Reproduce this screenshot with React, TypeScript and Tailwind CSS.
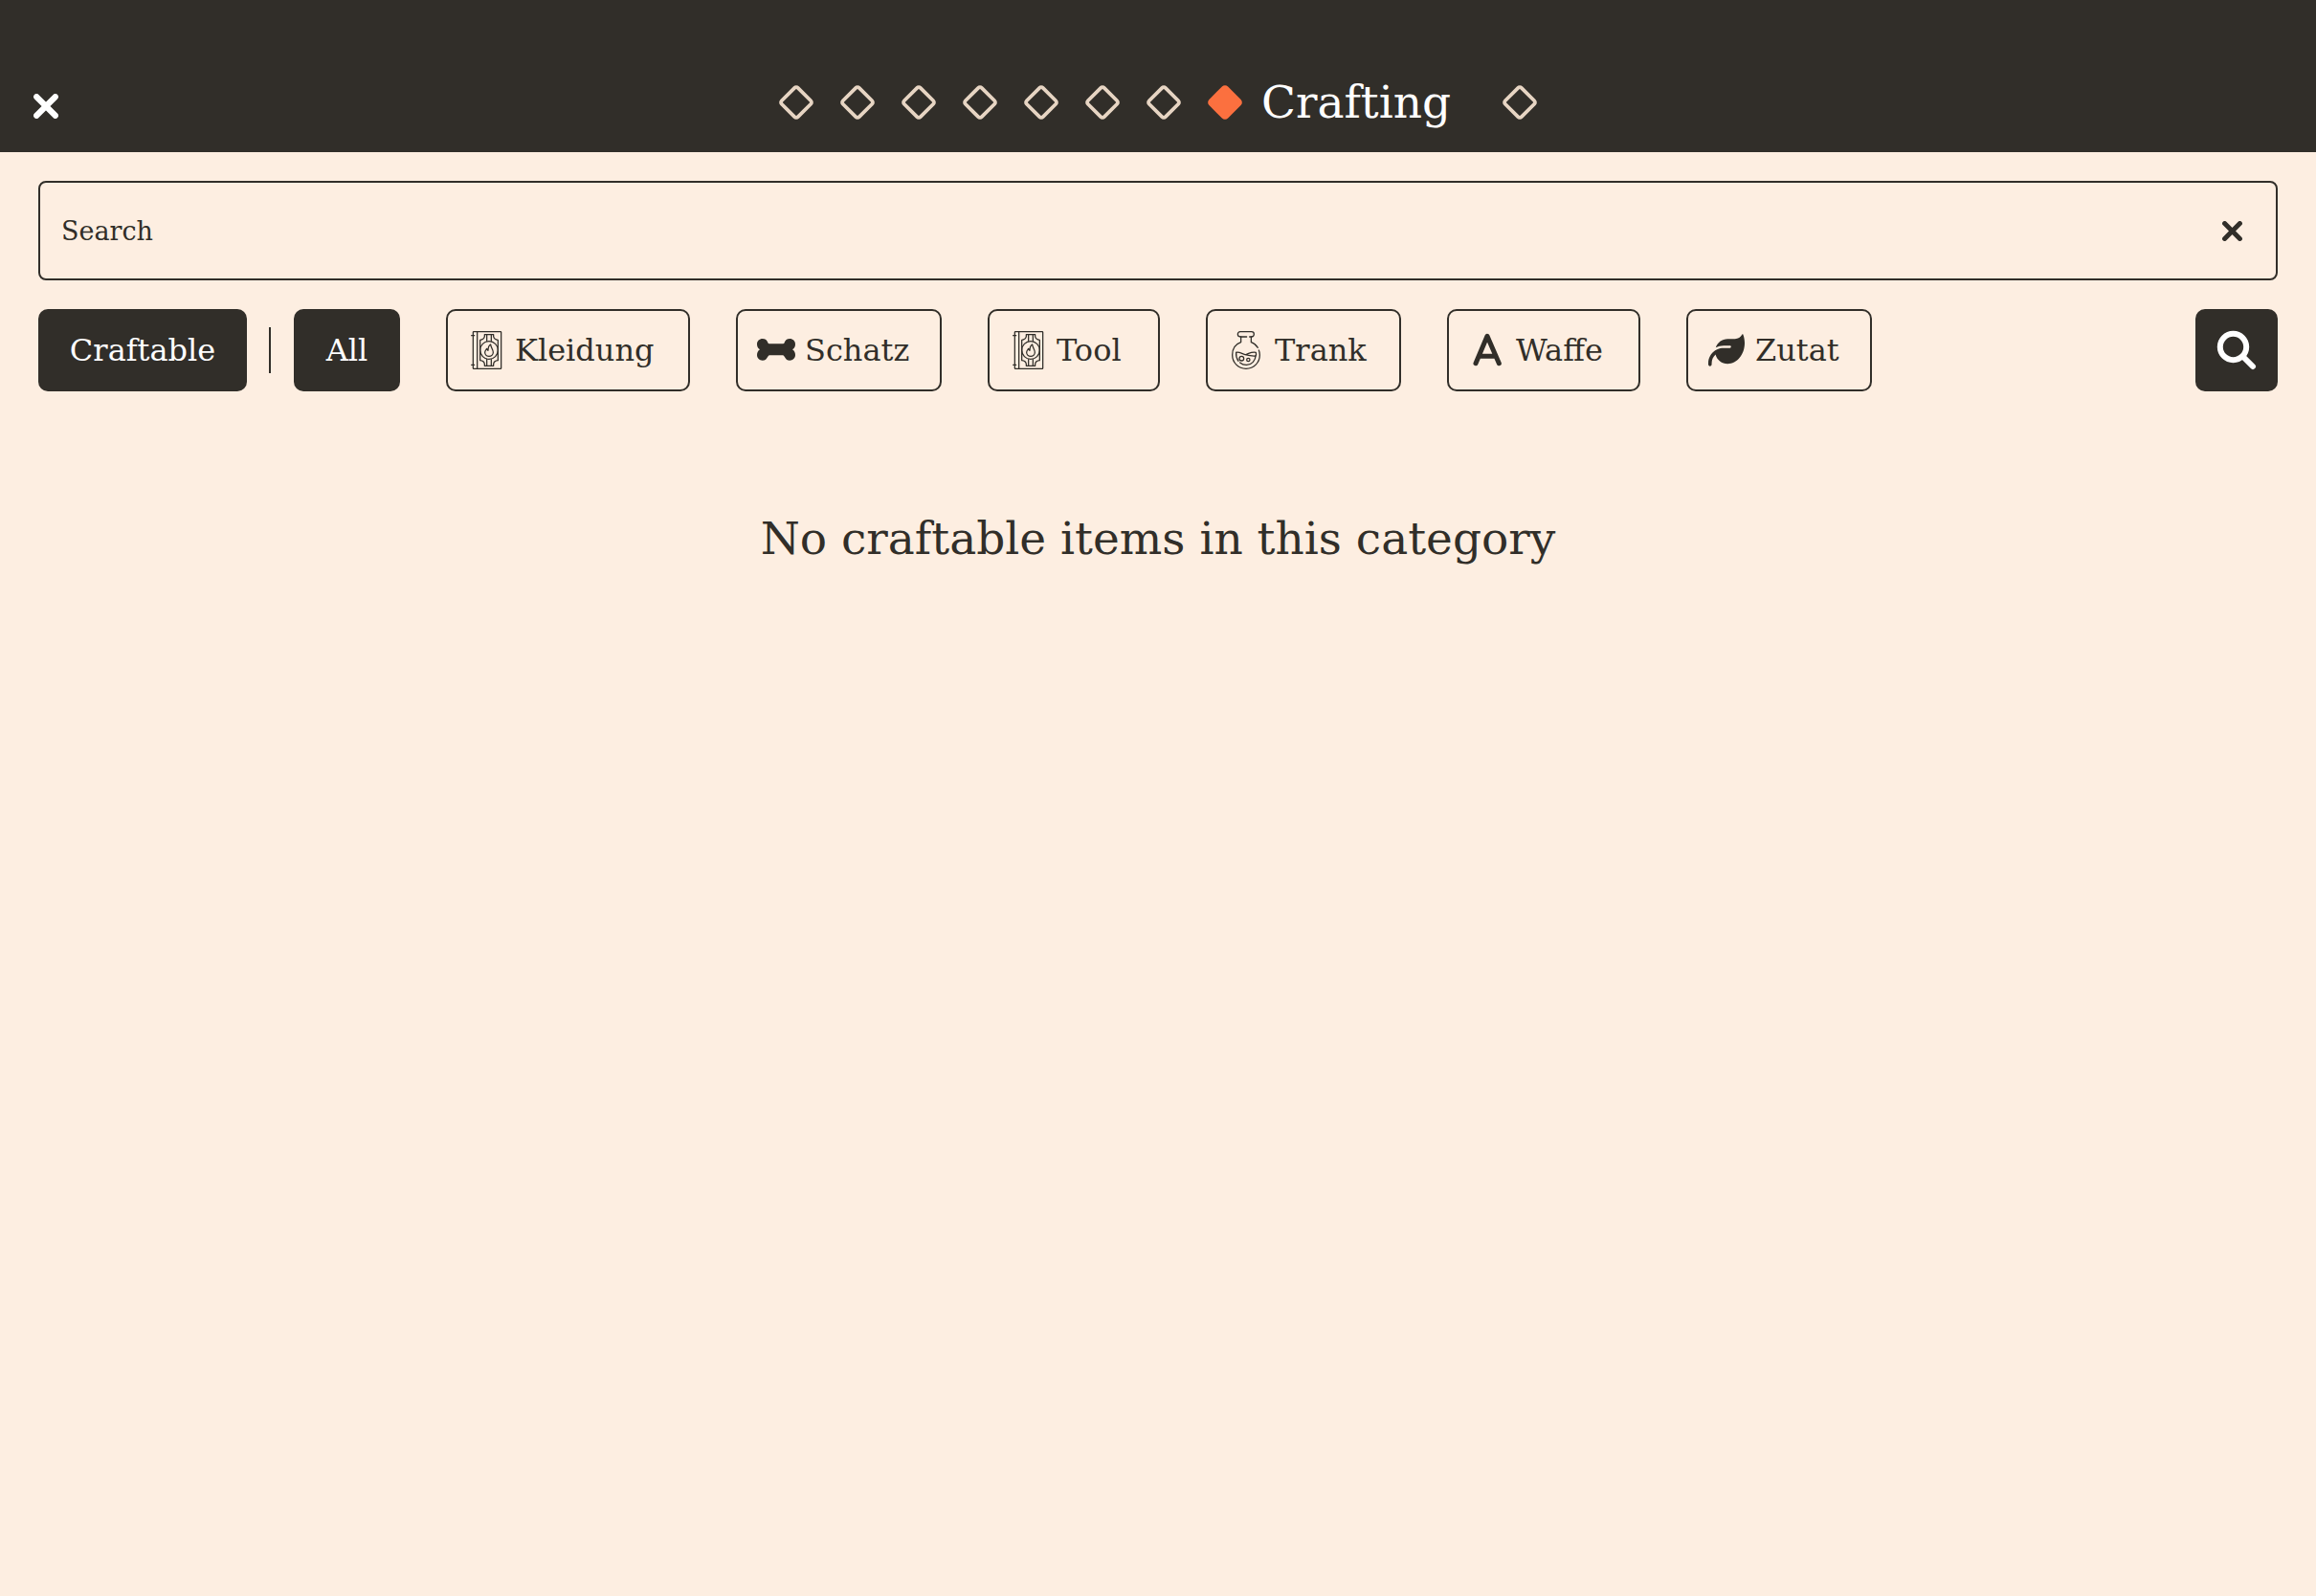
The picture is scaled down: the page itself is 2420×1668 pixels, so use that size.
import type { ReactNode } from "react";
import { FaLeaf } from "react-icons/fa6";

function CrossIcon({ className }: { className: string }) {
  return (
    <svg viewBox="0 0 26 26" className={className} fill="none" stroke="currentColor" strokeWidth="6.2" strokeLinecap="round" aria-hidden="true">
      <path d="M3.2 3.2 22.8 22.8M22.8 3.2 3.2 22.8" />
    </svg>
  );
}

function DiamondIcon({ filled = false }: { filled?: boolean }) {
  return (
    <svg viewBox="0 0 40 40" className="size-10 shrink-0" aria-hidden="true">
      <rect
        x="8"
        y="8"
        width="24"
        height="24"
        rx="2.5"
        transform="rotate(45 20 20)"
        fill={filled ? "#fb703f" : "none"}
        stroke={filled ? "#fb703f" : "#e7d5c3"}
        strokeWidth="3.8"
      />
    </svg>
  );
}

function SearchIcon() {
  return (
    <svg viewBox="0 0 42 42" className="size-[42px]" fill="none" stroke="currentColor" strokeWidth="6" strokeLinecap="round" aria-hidden="true">
      <circle cx="17.5" cy="17.5" r="13.7" />
      <path d="M27.5 27.5 38 38" />
    </svg>
  );
}

function BookIcon() {
  return (
    <svg viewBox="0 0 120 120" className="size-10" fill="none" stroke="currentColor" strokeWidth="3.8" strokeLinecap="round" strokeLinejoin="round" aria-hidden="true">
      <rect x="19" y="2" width="88" height="116" rx="2" />
      <path d="M32 2V118M14 14H23M14 106H23" />
      <path d="M55 11H83V17C84 23 89 27 97 28V92C89 93 84 97 83 103V109H55V103C54 97 49 93 41 92V28C49 27 54 23 55 17Z" />
      <path d="M62 11V31M76 11V31M62 89V109M76 89V109" />
      <circle cx="69" cy="60" r="28" />
      <path d="M74 42C75 53 82 57 82 67C82 74 76 79 69 79C62 79 56 74 56 67C56 61 60 58 62 55C63 58 64 60 66 61C66 52 67 46 74 42Z" />
    </svg>
  );
}

function BoneIcon() {
  return (
    <svg viewBox="0 0 120 120" className="size-10" fill="currentColor" aria-hidden="true">
      <path d="M17 24C26 24 32 29 34 36C35 39 37 40 40 40H80C83 40 85 39 86 36C88 29 94 24 103 24C112 24 120 31 120 41C120 48 117 54 111 58C117 62 120 68 120 75C120 85 112 92 103 92C94 92 90 87 86 80C84 77 82 76 79 76H41C38 76 36 77 34 80C30 87 26 92 17 92C8 92 0 85 0 75C0 68 3 62 9 58C3 54 0 48 0 41C0 31 8 24 17 24Z" />
    </svg>
  );
}

function PotionIcon() {
  return (
    <svg viewBox="0 0 120 120" className="size-10" fill="none" stroke="currentColor" strokeWidth="3.8" strokeLinecap="round" strokeLinejoin="round" aria-hidden="true">
      <path d="M62 18H42C37 18 34 15 34 10C34 5 37 2 42 2H77C82 2 85 5 85 10C85 15 82 18 77 18H71" />
      <path d="M44 18V35C27 41 17 56 17 75C17 99 36 118 60 118C84 118 103 99 103 75C103 69 102 64 100 60M97 52C92 44 85 38 76 35V18" />
      <path d="M29 67C40 65 46 71 57 74C69 77 79 79 90 78C92 75 92 71 91 67C82 66 76 67 68 70L60 74" />
      <path d="M29 67C28 77 31 87 36 94M41 99C53 109 71 109 82 97C87 91 90 85 90 78" />
      <circle cx="46" cy="86" r="7" />
      <circle cx="67" cy="90" r="5" />
    </svg>
  );
}

function LetterIcon() {
  return (
    <svg viewBox="0 0 120 120" className="size-10" fill="none" stroke="currentColor" strokeWidth="15" strokeLinecap="round" strokeLinejoin="round" aria-hidden="true">
      <path d="M24 101 60 16 97 101M34 79H87" />
    </svg>
  );
}

type Category = { name: string; icon: ReactNode; width: string };

const categories: Category[] = [
  { name: "Kleidung", icon: <BookIcon />, width: "min-w-[255px]" },
  { name: "Schatz", icon: <BoneIcon />, width: "min-w-[215px]" },
  { name: "Tool", icon: <BookIcon />, width: "min-w-[180px]" },
  { name: "Trank", icon: <PotionIcon />, width: "min-w-[204px]" },
  { name: "Waffe", icon: <LetterIcon />, width: "min-w-[202px]" },
  { name: "Zutat", icon: <FaLeaf className="size-[38px]" aria-hidden="true" />, width: "min-w-[194px]" },
];

const pages = ["Page 1", "Page 2", "Page 3", "Page 4", "Page 5", "Page 6", "Page 7"];

function PageDot({ label }: { label: string }) {
  return (
    <button type="button" aria-label={label} className="flex size-16 items-center justify-center">
      <DiamondIcon />
    </button>
  );
}

export default function App() {
  return (
    <div className="min-h-screen bg-[#fdeee1] font-['DejaVu_Serif',serif] text-[#312e29]">
      <header className="grid grid-cols-[1fr_auto_1fr] items-center bg-[#312e29] px-4 pt-[75px] pb-5 text-white">
        <button type="button" aria-label="Close" className="flex size-16 items-center justify-center pt-2">
          <CrossIcon className="size-[26px]" />
        </button>
        <nav aria-label="Pages" className="flex items-center">
          {pages.map((page) => (
            <PageDot key={page} label={page} />
          ))}
          <button type="button" aria-current="page" className="flex h-16 min-w-[308px] items-center gap-[18px] pl-3 text-[47px]">
            <DiamondIcon filled />
            Crafting
          </button>
          <PageDot label="Page 9" />
        </nav>
      </header>

      <main className="px-10 pt-[30px]">
        <div className="flex h-[104px] items-center rounded-lg border-2 border-[#312e29] pr-3.5 pl-[22px]">
          <input
            type="text"
            aria-label="Search"
            placeholder="Search"
            className="h-full min-w-0 flex-1 bg-transparent text-[27px] outline-none placeholder:text-[#312e29] placeholder:opacity-100"
          />
          <button type="button" aria-label="Clear search" className="flex size-16 items-center justify-center">
            <CrossIcon className="size-[21px]" />
          </button>
        </div>

        <div className="mt-[30px] flex items-center text-[32px]">
          <button type="button" className="flex h-[86px] min-w-[218px] items-center justify-center rounded-[10px] bg-[#312e29] px-7 text-white">
            Craftable
          </button>
          <span className="mr-6 ml-[23px] h-12 w-0.5 bg-[#312e29]" />
          <div className="flex items-center gap-12">
            <button type="button" className="flex h-[86px] min-w-[111px] items-center justify-center rounded-[10px] bg-[#312e29] px-7 text-white">
              All
            </button>
            {categories.map(({ name, icon, width }) => (
              <button
                key={name}
                type="button"
                className={`flex h-[86px] items-center gap-2.5 rounded-[10px] border-2 border-[#312e29] px-5 ${width}`}
              >
                <span className="flex w-10 shrink-0 justify-center">{icon}</span>
                {name}
              </button>
            ))}
          </div>
          <button type="button" aria-label="Search items" className="ml-auto flex size-[86px] items-center justify-center rounded-[10px] bg-[#312e29] text-white">
            <SearchIcon />
          </button>
        </div>

        <p className="mt-[118px] text-center text-[47px] leading-[72px]">No craftable items in this category</p>
      </main>
    </div>
  );
}
